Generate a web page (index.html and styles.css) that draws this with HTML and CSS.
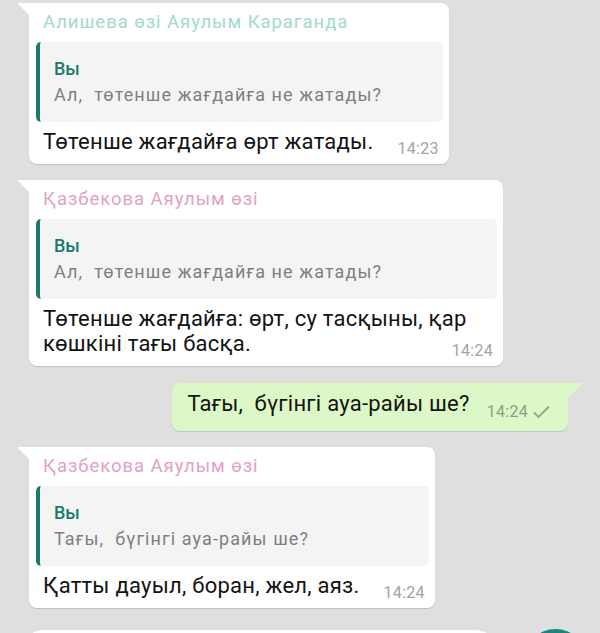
FILE: index.html
```html
<!DOCTYPE html>
<html lang="kk">
<head>
    <meta charset="UTF-8">
    <meta name="viewport" content="width=device-width, initial-scale=1.0">
    <title>Чат</title>
    <link rel="stylesheet" href="styles.css">
</head>
<body>

<div class="chat">
    <div class="row in">
        <div class="bubble">
            <div class="name name-teal">Алишева өзі Аяулым Караганда</div>
            <div class="quote">
                <div class="quote-author">Вы</div>
                <div class="quote-text">Ал,&nbsp; төтенше жағдайға не жатады?</div>
            </div>
            <div class="text">Төтенше жағдайға өрт жатады.<span class="meta">14:23</span></div>
        </div>
    </div>

    <div class="row in">
        <div class="bubble">
            <div class="name name-pink">Қазбекова Аяулым өзі</div>
            <div class="quote">
                <div class="quote-author">Вы</div>
                <div class="quote-text">Ал,&nbsp; төтенше жағдайға не жатады?</div>
            </div>
            <div class="text">Төтенше жағдайға: өрт, су тасқыны, қар көшкіні тағы басқа.<span class="meta">14:24</span></div>
        </div>
    </div>

    <div class="row out">
        <div class="bubble">
            <div class="text">Тағы,&nbsp; бүгінгі ауа-райы ше?<span class="meta">14:24<svg class="tick" width="20" height="14" viewBox="0 0 20 14"><path d="M3 7.5 L7.5 12 L18 1.5" fill="none" stroke="#8ea78a" stroke-width="1.8"/></svg></span></div>
        </div>
    </div>

    <div class="row in">
        <div class="bubble">
            <div class="name name-pink">Қазбекова Аяулым өзі</div>
            <div class="quote">
                <div class="quote-author">Вы</div>
                <div class="quote-text">Тағы,&nbsp; бүгінгі ауа-райы ше?</div>
            </div>
            <div class="text">Қатты дауыл, боран, жел, аяз.<span class="meta">14:24</span></div>
        </div>
    </div>
</div>

<div class="composer">
    <div class="input"></div>
    <div class="send"></div>
</div>

</body>
</html>
```

FILE: styles.css
```css
html, body {
    margin: 0;
    height: 633px;
    overflow: hidden;
}

body {
    font-family: Roboto, "Noto Sans", sans-serif;
    background-color: #dfdfdf;
    color: #141414;
}

.chat {
    display: flex;
    flex-direction: column;
    gap: 16px;
    padding: 3px 32px 0 29px;
}

.row {
    display: flex;
}

.row.out {
    justify-content: flex-end;
    margin-top: 1px;
}

.bubble {
    position: relative;
    box-sizing: border-box;
    max-width: 474px;
    background: #fff;
    border-radius: 0 8px 8px 8px;
    box-shadow: 0 1px 1px rgba(0, 0, 0, 0.14);
    padding: 8px 6px 7px 7px;
}

/* little tail on the top corner */
.in .bubble::before {
    content: "";
    position: absolute;
    left: -12px;
    top: 0;
    border-top: 12px solid #fff;
    border-left: 12px solid transparent;
}

.out .bubble {
    background: #dcf8c6;
    border-radius: 8px 0 8px 8px;
    padding: 8px 13px 11px 8px;
}

.out .bubble::after {
    content: "";
    position: absolute;
    right: -15px;
    top: 0;
    border-top: 15px solid #dcf8c6;
    border-right: 15px solid transparent;
}

.name {
    font-size: 18.5px;
    letter-spacing: 0.95px;
    line-height: 22px;
    padding: 0 7px;
    margin-bottom: 9px;
}

.name-teal {
    color: #a4dacd;
}

.name-pink {
    color: #e2a2c4;
}

.quote {
    background: #f4f4f4;
    border-left: 4px solid #1b7a6c;
    border-radius: 5px;
    padding: 17px 12px 16px 14px;
}

.quote-author {
    color: #1b7a6c;
    font-size: 18px;
    font-weight: 500;
    line-height: 20px;
    margin-bottom: 5px;
}

.quote-text {
    color: #7f7f7f;
    font-size: 18px;
    letter-spacing: 1.1px;
    line-height: 22px;
}

.text {
    display: flow-root;
    font-size: 22px;
    letter-spacing: 0.25px;
    line-height: 25px;
    padding: 0 4px 0 7px;
    margin-top: 7px;
}

.out .text {
    margin-top: 0;
}

.meta {
    float: right;
    display: flex;
    align-items: center;
    gap: 3px;
    margin: 11px 0 0 24px;
    font-size: 16px;
    letter-spacing: 0.3px;
    line-height: 17px;
    color: #a3a3a3;
}

.out .meta {
    margin: 12px 0 0 17px;
    color: #8d9e88;
}

.tick {
    display: block;
    margin-top: 1px;
}

.composer {
    display: flex;
    align-items: flex-start;
    gap: 25px;
    height: 6px;
    overflow: hidden;
    padding: 0 14px 0 19px;
    margin-top: 21px;
}

.input {
    flex: 1;
    height: 50px;
    background: #fff;
    border-radius: 25px;
    margin-top: 1px;
}

.send {
    flex: none;
    width: 61px;
    height: 61px;
    border-radius: 50%;
    background: #14897b;
}
```
